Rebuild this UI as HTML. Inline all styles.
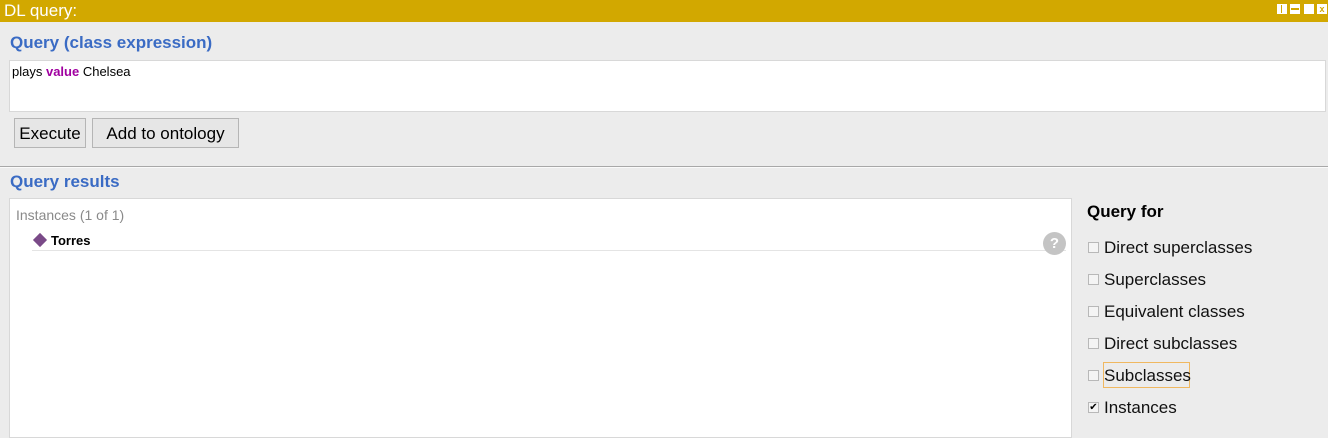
<!DOCTYPE html>
<html><head><style>
body{margin:0;width:1328px;height:427px;background:#ececec;position:relative;overflow:hidden;font-family:"Liberation Sans",sans-serif}
.abs{position:absolute}
.title{left:0;top:0;width:1328px;height:22px;background:#d2a800;color:#fff;font-size:17px;line-height:22px;padding-left:4px;box-sizing:border-box}
.h{color:#3a6bc4;font-weight:bold;font-size:17px}
.btn{top:118px;height:30px;border:1px solid #b5b5b5;background:#e6e6e6;font-size:17px;line-height:29px;text-align:center;box-sizing:border-box}
.cb{left:1088px;width:11px;height:11px;border:1px solid #b8b8b8;background:#f4f4f4;box-sizing:border-box}
.lbl{left:1104px;font-size:17px;color:#111}
.ico{top:4px;width:10px;height:10px;border:1px solid #fff;box-sizing:border-box}
</style></head><body>
<div class="abs title">DL query:</div>
<div class="abs ico" style="left:1277px;background:linear-gradient(90deg,#fff 0 3px,#d2a800 3px 4px,#fff 4px)"></div>
<div class="abs ico" style="left:1290px;background:linear-gradient(#fff 0 3px,#d2a800 3px 5px,#fff 5px)"></div>
<div class="abs ico" style="left:1304px;background:#fff"></div>
<div class="abs ico" style="left:1317px;background:#fff;color:#d2a800;font-size:9px;line-height:8px;text-align:center;font-weight:bold">x</div>
<div class="abs h" style="left:10px;top:33px">Query (class expression)</div>
<div class="abs" style="left:9px;top:60px;width:1317px;height:52px;background:#fff;border:1px solid #d8d8d8;box-sizing:border-box;font-size:13px;padding:3px 2px">plays <b style="color:#a000a0">value</b> Chelsea</div>
<div class="abs btn" style="left:14px;width:72px">Execute</div>
<div class="abs btn" style="left:92px;width:147px">Add to ontology</div>
<div class="abs" style="left:0;top:166px;width:1328px;height:1px;background:#a8a8a8"></div>
<div class="abs" style="left:0;top:167px;width:1328px;height:1px;background:#fafafa"></div>
<div class="abs h" style="left:10px;top:172px">Query results</div>
<div class="abs" style="left:9px;top:198px;width:1063px;height:240px;background:#fff;border:1px solid #d8d8d8;box-sizing:border-box"></div>
<div class="abs" style="left:16px;top:207px;font-size:14px;color:#8a8a8a">Instances (1 of 1)</div>
<div class="abs" style="left:35px;top:235px;width:10px;height:10px;background:#7a4a88;transform:rotate(45deg)"></div>
<div class="abs" style="left:51px;top:233px;font-size:13px;font-weight:bold;color:#000">Torres</div>
<div class="abs" style="left:32px;top:250px;width:1034px;height:1px;background:#e4e4e4"></div>
<div class="abs" style="left:1043px;top:232px;width:23px;height:23px;border-radius:50%;background:#c4c4c4;color:#fff;font-size:15px;font-weight:bold;text-align:center;line-height:23px">?</div>
<div class="abs" style="left:1087px;top:202px;font-size:17px;font-weight:bold;color:#000">Query for</div>
<div class="abs cb" style="top:242px"></div><div class="abs lbl" style="top:238px">Direct superclasses</div>
<div class="abs cb" style="top:274px"></div><div class="abs lbl" style="top:270px">Superclasses</div>
<div class="abs cb" style="top:306px"></div><div class="abs lbl" style="top:302px">Equivalent classes</div>
<div class="abs cb" style="top:338px"></div><div class="abs lbl" style="top:334px">Direct subclasses</div>
<div class="abs cb" style="top:370px"></div><div class="abs" style="left:1103px;top:362px;width:87px;height:26px;border:1px solid #f0b860;box-sizing:border-box"></div><div class="abs lbl" style="top:366px">Subclasses</div>
<div class="abs cb" style="top:402px;font-size:10px;line-height:9px;text-align:center;color:#000">✔</div><div class="abs lbl" style="top:398px">Instances</div>
</body></html>
